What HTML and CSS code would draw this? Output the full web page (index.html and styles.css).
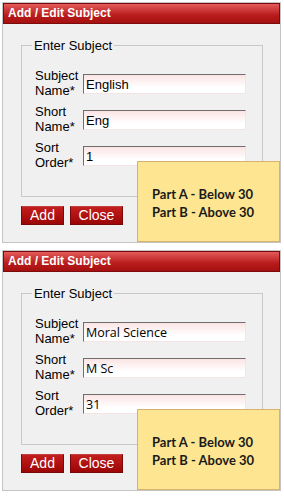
FILE: index.html
```html
<!DOCTYPE html>
<html lang="en">
<head>
    <meta charset="UTF-8">
    <title>Add / Edit Subject</title>
    <link rel="stylesheet" href="styles.css">
</head>
<body>
    <div class="panel">
        <div class="panel-head">Add / Edit Subject</div>
        <fieldset class="subject-box">
            <legend>Enter Subject</legend>
            <div class="form-row">
                <label>Subject Name*</label>
                <input type="text" value="English">
            </div>
            <div class="form-row">
                <label>Short Name*</label>
                <input type="text" value="Eng">
            </div>
            <div class="form-row">
                <label>Sort Order*</label>
                <input type="text" value="1">
            </div>
        </fieldset>
        <div class="buttons">
            <button class="btn btn-add">Add</button>
            <button class="btn btn-close">Close</button>
        </div>
        <div class="note">
            <p>Part A - Below 30</p>
            <p>Part B - Above 30</p>
        </div>
    </div>

    <div class="panel">
        <div class="panel-head">Add / Edit Subject</div>
        <fieldset class="subject-box alt">
            <legend>Enter Subject</legend>
            <div class="form-row">
                <label>Subject Name*</label>
                <input type="text" value="Moral Science">
            </div>
            <div class="form-row">
                <label>Short Name*</label>
                <input type="text" value="M Sc">
            </div>
            <div class="form-row">
                <label>Sort Order*</label>
                <input type="text" value="31">
            </div>
        </fieldset>
        <div class="buttons">
            <button class="btn btn-add">Add</button>
            <button class="btn btn-close">Close</button>
        </div>
        <div class="note">
            <p>Part A - Below 30</p>
            <p>Part B - Above 30</p>
        </div>
    </div>
</body>
</html>
```

FILE: styles.css
```css
body {
    margin: 0;
    background: #fff;
    font-family: "Liberation Sans", Arial, sans-serif;
    font-size: 13px;
    color: #000;
}
.panel {
    position: relative;
    box-sizing: border-box;
    width: 279px;
    height: 241px;
    margin: 2px 0 0 2px;
    border: 1px solid #c4c4c4;
    background: #f0f0f0;
}
.panel + .panel {
    margin-top: 7px;
}
.panel-head {
    height: 19px;
    margin: 0 0 0 0;
    border: 1px solid #7a0c0c;
    background: linear-gradient(to bottom, #e25a5a, #b81b1b 60%, #a51010);
    color: #fff;
    font-weight: bold;
    font-size: 12px;
    line-height: 19px;
    padding-left: 4px;
}
.subject-box {
    box-sizing: border-box;
    width: 242px;
    margin: 14px 0 0 18px;
    padding: 15px 0 20px 13px;
    border: 1px solid #c8c8c8;
}
.subject-box legend {
    padding: 0 2px;
    margin-left: -3px;
    line-height: 15px;
}
.form-row {
    display: flex;
    align-items: flex-start;
    height: 36px;
}
.form-row label {
    width: 48px;
    line-height: 15px;
}
.form-row input {
    box-sizing: border-box;
    width: 163px;
    height: 20px;
    margin-top: 6px;
    padding: 0 2px;
    border: 1px solid #f4e4e4;
    border-top-color: #6e6e6e;
    border-left-color: #6e6e6e;
    background: linear-gradient(to bottom, #fbe4e4, #fff 70%);
    font-family: "Liberation Sans", Arial, sans-serif;
    font-size: 13px;
    color: #000;
    outline: none;
}
.alt .form-row input {
    font-family: "Open Sans", sans-serif;
    font-size: 12.5px;
}
.buttons {
    display: flex;
    gap: 6px;
    margin: 9px 0 0 18px;
}
.btn {
    height: 19px;
    padding: 0;
    border: 1px solid #7a0808;
    border-top-color: #c04040;
    background: linear-gradient(to bottom, #c41e1e, #9c0505);
    color: #fff;
    font-family: "Liberation Sans", Arial, sans-serif;
    font-size: 14px;
    line-height: 17px;
}
.btn-add {
    width: 43px;
}
.btn-close {
    width: 53px;
}
.note {
    position: absolute;
    right: 0;
    bottom: 0;
    box-sizing: border-box;
    width: 143px;
    height: 81px;
    padding: 23px 0 0 14px;
    background: #fde591;
    border: 1px solid #d7b26c;
    font-family: Lato, "Open Sans", sans-serif;
    font-weight: bold;
    font-size: 13px;
    color: #1a1a1a;
}
.note p {
    margin: 0;
    line-height: 18px;
}
```
